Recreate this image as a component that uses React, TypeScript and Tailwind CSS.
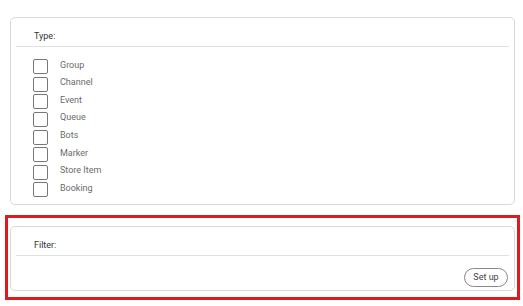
import React from 'react';

const types = ['Group', 'Channel', 'Event', 'Queue', 'Bots', 'Marker', 'Store Item', 'Booking'];

const Card: React.FC<{ title: string; children?: React.ReactNode; className?: string }> = ({
  title,
  children,
  className = '',
}) => (
  <div className={`rounded-[5px] border border-[#d9d9d9] bg-white ${className}`}>
    <div className="mx-[5px] h-[29px] border-b border-[#e0e0e0] pl-[18px] pt-[13px] text-[9px] leading-[10px] text-[#333]">
      {title}
    </div>
    {children}
  </div>
);

export default function App() {
  return (
    <div className="h-[306px] w-[523px] bg-white pt-[17px] font-['Roboto',sans-serif]">
      <Card title="Type:" className="ml-[10px] h-[188px] w-[505px]">
        <div className="flex flex-col pl-[22px] pt-[11px]">
          {types.map((t) => (
            <label key={t} className="flex h-[17.6px] items-center">
              <span className="h-[15px] w-[15px] rounded-[2px] border-[1.5px] border-[#777]" />
              <span className="ml-[12px] -mt-[3px] text-[9px] text-[#6b6b6b]">{t}</span>
            </label>
          ))}
        </div>
      </Card>

      <div className="ml-[5px] mt-[10px] w-[515px] border-[3px] border-[#dc1a20] pb-[6px] pl-[2px] pr-[2px] pt-[8px]">
        <Card title="Filter:" className="h-[65px]">
          <div className="flex justify-end pr-[6px] pt-[12px]">
            <button className="h-[19px] w-[44px] rounded-full border border-[#888] text-[9px] text-[#444]">
              Set up
            </button>
          </div>
        </Card>
      </div>
    </div>
  );
}
